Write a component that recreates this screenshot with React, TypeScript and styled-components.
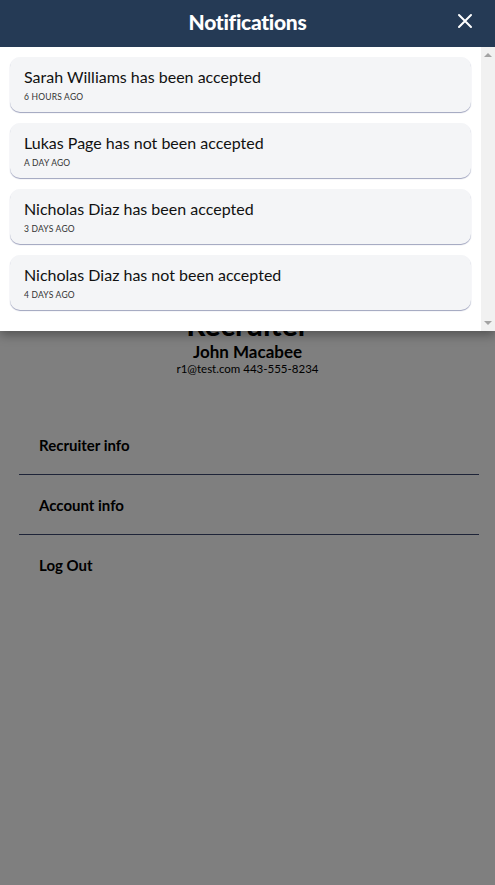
import React from "react";
import styled, { createGlobalStyle } from "styled-components";

const Global = createGlobalStyle`
  html, body { margin: 0; padding: 0; background: #ffffff; }
  body { font-family: Lato, "Noto Sans", sans-serif; color: #000; }
  * { box-sizing: border-box; }
`;

const Page = styled.div`
  position: relative;
  width: 495px;
  height: 885px;
  overflow: hidden;
  background: #ffffff;
`;

const Profile = styled.div`
  display: flex;
  flex-direction: column;
  align-items: center;
  padding-top: 306px;
`;

const Role = styled.h1`
  margin: 0;
  font-size: 30px;
  line-height: 36px;
  font-weight: 700;
`;

const Name = styled.h2`
  margin: 0;
  font-size: 17px;
  line-height: 20px;
  font-weight: 700;
`;

const Contact = styled.div`
  font-size: 11.5px;
  line-height: 14px;
`;

const Menu = styled.nav`
  display: flex;
  flex-direction: column;
  margin: 39px 16px 0 19px;
`;

const MenuItem = styled.div<{ $last?: boolean }>`
  height: 60px;
  display: flex;
  align-items: center;
  padding: 0 20px 0 20px;
  font-size: 15px;
  font-weight: 700;
  border-bottom: ${(p) => (p.$last ? "none" : "1px solid #3c4870")};
`;

const Backdrop = styled.div`
  position: absolute;
  inset: 0;
  background: rgba(0, 0, 0, 0.5);
`;

const Modal = styled.div`
  position: absolute;
  top: 0;
  left: 0;
  width: 495px;
  height: 331px;
  background: #ffffff;
  display: flex;
  flex-direction: column;
  box-shadow: 0 4px 10px rgba(0, 0, 0, 0.35);
`;

const Header = styled.header`
  position: relative;
  height: 47px;
  background: #253a55;
  display: flex;
  align-items: center;
  justify-content: center;
  flex-shrink: 0;
  padding-bottom: 5px;
`;

const Title = styled.h3`
  margin: 0;
  color: #ffffff;
  font-size: 21px;
  font-weight: 900;
  letter-spacing: -0.3px;
`;

const Close = styled.button`
  position: absolute;
  right: 20px;
  top: 11px;
  width: 20px;
  height: 20px;
  padding: 0;
  border: none;
  background: transparent;
  display: flex;
  align-items: center;
  justify-content: center;
  cursor: pointer;
`;

const Body = styled.div`
  flex: 1;
  display: flex;
  min-height: 0;
`;

const List = styled.div`
  flex: 1;
  overflow: hidden;
  display: flex;
  flex-direction: column;
  gap: 11px;
  padding: 10px 10px 10px 10px;
`;

const ScrollTrack = styled.div`
  width: 14px;
  flex-shrink: 0;
  background: #f1f1f1;
  display: flex;
  flex-direction: column;
  justify-content: space-between;
  align-items: center;
  padding: 6px 0 6px 0;
`;

const Arrow = styled.div<{ $down?: boolean }>`
  width: 0;
  height: 0;
  border-left: 4px solid transparent;
  border-right: 4px solid transparent;
  ${(p) =>
    p.$down
      ? "border-top: 4px solid #a3a3a3;"
      : "border-bottom: 4px solid #a3a3a3;"}
`;

const Card = styled.div`
  flex-shrink: 0;
  height: 55px;
  border-radius: 10px;
  background: #f4f5f7;
  box-shadow: 0 1px 1px #9ea3bd;
  padding: 10px 14px 0 14px;
  display: flex;
  flex-direction: column;
`;

const CardText = styled.div`
  font-size: 16px;
  line-height: 20px;
  color: #111;
`;

const CardTime = styled.div`
  margin-top: 5px;
  font-size: 8.5px;
  line-height: 10px;
  text-transform: uppercase;
  color: #333;
  letter-spacing: 0.2px;
`;

const notes = [
  { text: "Sarah Williams has been accepted", time: "6 hours ago" },
  { text: "Lukas Page has not been accepted", time: "a day ago" },
  { text: "Nicholas Diaz has been accepted", time: "3 days ago" },
  { text: "Nicholas Diaz has not been accepted", time: "4 days ago" },
];

export default function App() {
  return (
    <Page>
      <Global />
      <Profile>
        <Role>Recruiter</Role>
        <Name>John Macabee</Name>
        <Contact>r1@test.com 443-555-8234</Contact>
      </Profile>
      <Menu>
        <MenuItem>Recruiter info</MenuItem>
        <MenuItem>Account info</MenuItem>
        <MenuItem $last>Log Out</MenuItem>
      </Menu>
      <Backdrop />
      <Modal>
        <Header>
          <Title>Notifications</Title>
          <Close aria-label="close">
            <svg width="16" height="16" viewBox="0 0 16 16">
              <path d="M2 2 L14 14 M14 2 L2 14" stroke="#fff" strokeWidth="2" strokeLinecap="round" />
            </svg>
          </Close>
        </Header>
        <Body>
          <List>
            {notes.map((n, i) => (
              <Card key={i}>
                <CardText>{n.text}</CardText>
                <CardTime>{n.time}</CardTime>
              </Card>
            ))}
          </List>
          <ScrollTrack>
            <Arrow />
            <Arrow $down />
          </ScrollTrack>
        </Body>
      </Modal>
    </Page>
  );
}
